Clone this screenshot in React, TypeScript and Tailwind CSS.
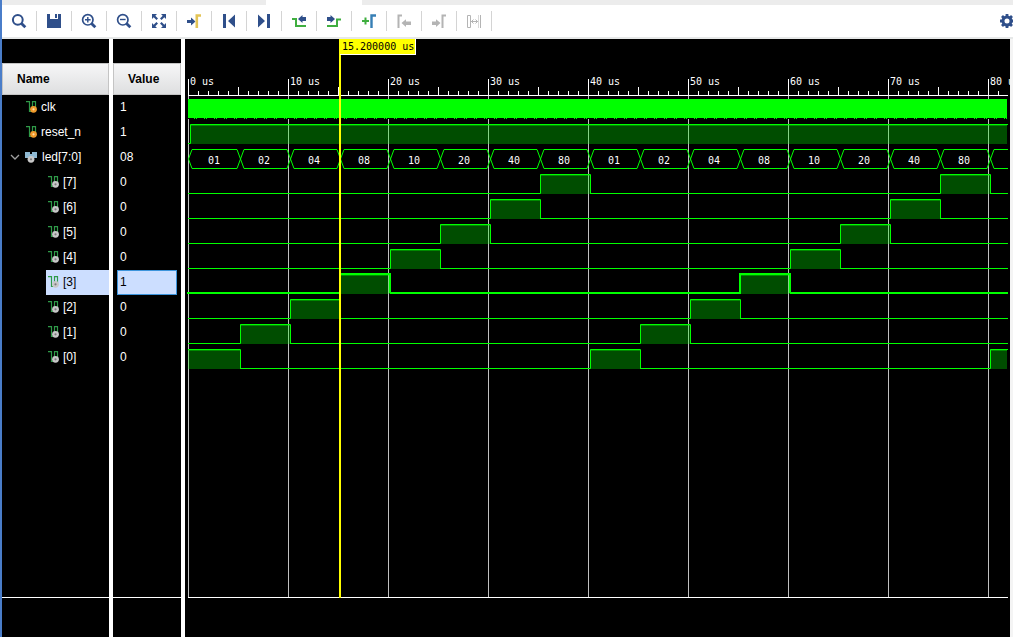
import { useState } from "react";

const GREEN = "#00ff00";
const NAVY = "#2f4f8a";
const LEAF = "#3fae3f";
const GRAY = "#b4b4b4";

type IconName =
  | "search" | "save" | "zoomIn" | "zoomOut" | "fit" | "gotoCursor" | "first" | "last"
  | "prevEdge" | "nextEdge" | "addMarker" | "prevMarker" | "nextMarker" | "swap" | "gear";

const icons: Record<IconName, React.ReactNode> = {
  search: (
    <g fill="none" stroke={NAVY}>
      <circle cx="6.800" cy="6.800" r="4.900" strokeWidth="2" />
      <path d="M10.500 10.500L14.300 14.300" strokeWidth="2.800" />
    </g>
  ),
  save: (
    <path fill={NAVY} fillRule="evenodd" d="M1 1H4V6H12V1H15V15H1ZM9 1H11V5H9Z" />
  ),
  zoomIn: (
    <g fill="none" stroke={NAVY}>
      <circle cx="6.800" cy="6.800" r="5.200" strokeWidth="1.700" />
      <path d="M10.500 10.500L14.300 14.300" strokeWidth="2.800" />
      <path d="M4 6.800H9.600M6.800 4V9.600" strokeWidth="1.400" />
    </g>
  ),
  zoomOut: (
    <g fill="none" stroke={NAVY}>
      <circle cx="6.800" cy="6.800" r="5.200" strokeWidth="1.700" />
      <path d="M10.500 10.500L14.300 14.300" strokeWidth="2.800" />
      <path d="M4 6.500H9.600" strokeWidth="1.400" />
    </g>
  ),
  fit: (
    <g fill={NAVY}>
      <path d="M1 1H6L4.300 2.700L7 5.400L5.400 7L2.700 4.300L1 6Z" />
      <path d="M15 1V6L13.300 4.300L10.600 7L9 5.400L11.700 2.700L10 1Z" />
      <path d="M1 15V10L2.700 11.700L5.400 9L7 10.600L4.300 13.300L6 15Z" />
      <path d="M15 15H10L11.700 13.300L9 10.600L10.600 9L13.300 11.700L15 10Z" />
    </g>
  ),
  gotoCursor: (
    <g>
      <path fill={NAVY} d="M1 7H5V4.500L9.500 8.500L5 12.500V10H1Z" />
      <path fill="none" stroke="#e3c456" strokeWidth="2.600" d="M15 2.500H10.800V15" />
    </g>
  ),
  first: <path fill={NAVY} d="M2 1H5V15H2ZM14 1.500V14.500L7 8Z" />,
  last: <path fill={NAVY} d="M14 1H11V15H14ZM2 1.500V14.500L9 8Z" />,
  prevEdge: (
    <g>
      <path fill="none" stroke={LEAF} strokeWidth="2" d="M1 6H5V13H15" />
      <path fill={NAVY} d="M15 4V8H11.500V10L7 6L11.500 2V4Z" />
    </g>
  ),
  nextEdge: (
    <g>
      <path fill="none" stroke={LEAF} strokeWidth="2" d="M1 13H11V6.500H15" />
      <path fill={NAVY} d="M1 4V8H4.500V10L9 6L4.500 2V4Z" />
    </g>
  ),
  addMarker: (
    <g fill="none" strokeWidth="2">
      <path stroke={LEAF} d="M1 8H8M4.500 4.500V11.500" />
      <path stroke="#377fb5" strokeWidth="2.400" d="M15 2.500H10.500V15" />
    </g>
  ),
  prevMarker: (
    <g>
      <path fill="none" stroke={GRAY} strokeWidth="2" d="M6 2.500H2.500V15" />
      <path fill={GRAY} d="M15 8.500V12H10V14L5.500 10L10 6.200V8.500Z" />
    </g>
  ),
  nextMarker: (
    <g>
      <path fill="none" stroke={GRAY} strokeWidth="2" d="M15 2.500H11.500V15" />
      <path fill={GRAY} d="M1 8.500V12H5V14L9.500 10L5 6.200V8.500Z" />
    </g>
  ),
  swap: (
    <g fill="none" stroke={GRAY}>
      <path d="M1.500 2.500H4.500V14.500H1.500ZM14.500 2V15" />
      <path d="M12.500 2V15" strokeOpacity="0.500" />
      <path d="M5 8.500H12M7.500 6.500L5.500 8.500L7.500 10.500M9.500 6.500L11.500 8.500L9.500 10.500" />
    </g>
  ),
  gear: (
    <g fill="none" stroke={NAVY}>
      <circle cx="8" cy="8" r="4" strokeWidth="3" />
      <path strokeWidth="2.800" d="M8 1V4M8 12V15M1 8H4M12 8H15M3 3L5 5M11 11L13 13M3 13L5 11M11 5L13 3" />
    </g>
  ),
};

function Icon({ name }: { name: IconName }) {
  return (
    <svg width="16" height="16" viewBox="0 0 16 16" aria-hidden="true">
      {icons[name]}
    </svg>
  );
}

const tools: { icon: IconName; label: string; disabled?: boolean }[] = [
  { icon: "search", label: "Find" },
  { icon: "save", label: "Save" },
  { icon: "zoomIn", label: "Zoom in" },
  { icon: "zoomOut", label: "Zoom out" },
  { icon: "fit", label: "Zoom fit" },
  { icon: "gotoCursor", label: "Go to cursor" },
  { icon: "first", label: "Go to start" },
  { icon: "last", label: "Go to end" },
  { icon: "prevEdge", label: "Previous transition" },
  { icon: "nextEdge", label: "Next transition" },
  { icon: "addMarker", label: "Add marker" },
  { icon: "prevMarker", label: "Previous marker", disabled: true },
  { icon: "nextMarker", label: "Next marker", disabled: true },
  { icon: "swap", label: "Swap cursors", disabled: true },
];

type Kind = "input" | "bus" | "bit";
const signals: { name: string; value: string; kind: Kind }[] = [
  { name: "clk", value: "1", kind: "input" },
  { name: "reset_n", value: "1", kind: "input" },
  { name: "led[7:0]", value: "08", kind: "bus" },
  ...[7, 6, 5, 4, 3, 2, 1, 0].map((n) => ({
    name: `[${n}]`,
    value: n === 3 ? "1" : "0",
    kind: "bit" as Kind,
  })),
];

const indent: Record<Kind, string> = { input: "pl-6", bus: "pl-2", bit: "pl-11" };
const inset: Record<Kind, string> = { input: "gap-[3px]", bus: "gap-[5px]", bit: "gap-[3px] pl-0.5" };

function SignalIcon({ kind }: { kind: Kind }) {
  const dot = kind === "input" ? "#f09a2c" : "#c8c8c8";
  const cx = kind === "bus" ? 6 : 7.5;
  return (
    <svg width="12" height="12" viewBox="0 0 12 12" aria-hidden="true" className="shrink-0">
      {kind === "bus" ? (
        <path fill="#8fb9d2" d="M0 1H5V3H7V1H12V7H9L6 10L3 7H0Z" />
      ) : (
        <path fill="none" stroke="#2f9a48" strokeWidth="1.200" d="M0 0.600H3.500V10.500H6.500V0.600H9.500V7" />
      )}
      <circle cx={cx} cy="8.300" r="3.400" fill={dot} />
      <circle cx={cx} cy="8.300" r="1.100" fill={kind === "input" ? "#ffe0a8" : "#7a7a7a"} />
    </svg>
  );
}

const END = 823;
const origin = 5;
const rowTop = (i: number) => 56 + i * 25;
const codes = ["01", "02", "04", "08", "10", "20", "40", "80"];

function Bit({ row, bit, bold }: { row: number; bit: number; bold: boolean }) {
  const top = rowTop(row) + 4;
  const low = top + 19;
  const w = bold ? 2 : 1;
  const off = bold ? 0 : 0.5;
  const shift = bold ? 1 : 0;
  const pulses = [0, 1, 2]
    .map((n) => {
      const at = origin + bit * 50 + n * 400;
      return { from: at === origin ? 3 : at, to: Math.min(at + 50, END) };
    })
    .filter((p) => p.from < END);
  let d = "";
  let x = bold ? 2 : 3;
  for (const p of pulses) {
    d += p.from > 3
      ? `M${x} ${low + off}H${p.from + off}V${top + off}H${p.to + off}`
      : `M3 ${top + off}H${p.to + off}`;
    if (p.to < END) d += `V${low + off}`;
    x = p.to;
  }
  if (x < END) d += `M${x} ${low + off}H${END}`;
  return (
    <g>
      {pulses.map((p) => {
        const width = Math.min(p.to, END - 1) - p.from;
        return (
          <g key={p.from}>
            <rect x={p.from} y={top} width={width} height="20" fill={GREEN} fillOpacity="0.3" />
            <rect x={p.from} y={top + 1} width={width} height="1" fill={GREEN} fillOpacity="0.35" />
          </g>
        );
      })}
      <path d={d} fill="none" stroke={GREEN} strokeWidth={w} transform={shift ? "translate(0 0)" : undefined} />
    </g>
  );
}

function Waveform() {
  const crossings = Array.from({ length: 17 }, (_, i) => origin + i * 50);
  const bus = rowTop(2) + 4;
  const busPath = crossings
    .map((x, i) => {
      const left = i === 0 ? 3 : x;
      const right = Math.min(x + 50, END + 4);
      return `M${right + 0.5} ${bus + 10}L${right - 3} ${bus + 0.5}H${left + 4}L${left + 0.5} ${bus + 10}L${left + 4} ${bus + 19.5}H${right - 3}L${right + 0.5} ${bus + 10}`;
    })
    .join("");
  const ticks = Array.from({ length: 82 }, (_, i) => i);
  return (
    <svg
      className="block h-full w-full font-['DejaVu_Sans_Mono',monospace] text-[10px]"
      role="img"
      aria-label="Waveform"
    >
      <defs>
        <clipPath id="plot">
          <rect x="0" y="0" width={END} height="600" />
        </clipPath>
        <pattern id="clkEdge" x="9" y="0" width="10" height="1" patternUnits="userSpaceOnUse">
          <path d="M0 0.500H1M2 0.500H3" stroke={GREEN} />
        </pattern>
      </defs>
      <g shapeRendering="crispEdges" stroke="#c0c0c0">
        {ticks.filter((t) => t % 10 === 0).map((t) => (
          <path key={t} d={`M${3.5 + t * 10} 57V558`} />
        ))}
      </g>
      <g shapeRendering="crispEdges" stroke="#ffffff">
        {ticks.map((t) => (
          <path key={t} d={`M${3.5 + t * 10} ${t % 10 === 0 ? 40 : t % 5 === 0 ? 48 : 52}V57`} />
        ))}
        <path d={`M3 56.500H${END}M3 558.500H${END}`} />
      </g>
      <g fill="#ffffff">
        {ticks.filter((t) => t % 10 === 0).map((t) => (
          <text key={t} x={5 + t * 10} y="46">{`${t} us`}</text>
        ))}
      </g>
      <g clipPath="url(#plot)">
        <rect x="3" y="60" width={END - 4} height="19" fill={GREEN} />
        <rect x="3" y="79" width={END - 4} height="1" fill="#000000" />
        <g transform="translate(0 79)">
          <rect x="3" y="0" width={END - 4} height="1" fill="url(#clkEdge)" />
        </g>
        <rect x="5" y="85" width={END - 6} height="20" fill={GREEN} fillOpacity="0.3" />
        <rect x="5" y="86" width={END - 6} height="1" fill={GREEN} fillOpacity="0.35" />
        <path d={`M3 104.500H5.500V85.500H${END}`} fill="none" stroke={GREEN} />
        <path d={busPath} fill="none" stroke={GREEN} />
        <g fill="#ffffff" textAnchor="middle">
          {crossings.slice(0, 16).map((x, i) => (
            <text key={x} x={x + 24} y={bus + 15}>{codes[i % 8]}</text>
          ))}
        </g>
        {[7, 6, 5, 4, 3, 2, 1, 0].map((n, i) => (
          <Bit key={n} row={i + 3} bit={n} bold={n === 3} />
        ))}
      </g>
      <rect x="154" y="0" width="2" height="559" fill="#ffff00" />
      <rect x="155" y="0" width="76" height="16" fill="#ffffff" />
      <rect x="155" y="0" width="75" height="15" fill="#ffff00" />
      <text x="157" y="11" fill="#000000">15.200000 us</text>
    </svg>
  );
}

export default function App() {
  const [selected, setSelected] = useState("[3]");
  return (
    <div className="flex h-screen min-w-0 flex-col overflow-hidden border-l-2 border-[#4a7dc9] bg-white font-['Liberation_Sans',Arial,sans-serif] text-xs">
      <div className="flex h-[5px] shrink-0 bg-[#ececec]">
        <div className="ml-66 w-24 bg-white" />
      </div>
      <div className="flex h-[34px] shrink-0 items-center justify-between border-b-2 border-[#e6e8e8] bg-white" role="toolbar">
        <div className="flex">
          {tools.map((t) => (
            <button
              key={t.icon}
              type="button"
              aria-label={t.label}
              disabled={t.disabled}
              className="flex h-5 w-[35px] items-center justify-center border-r border-[#d4d4d4]"
            >
              <Icon name={t.icon} />
            </button>
          ))}
        </div>
        <button type="button" aria-label="Settings" className="-mr-0.5">
          <Icon name="gear" />
        </button>
      </div>
      <div className="flex min-h-0 flex-1">
        <section className="flex w-[107px] shrink-0 flex-col bg-black pt-6 text-white" aria-label="Names">
          <h2 className="flex h-8 shrink-0 items-center border border-[#c4c4c4] bg-linear-to-b from-[#f6f6f7] to-[#dedfe0] pl-3.5 font-bold text-black">
            Name
          </h2>
          <ul className="min-h-0 flex-1">
            {signals.map((s) => (
              <li key={s.name} className={indent[s.kind]}>
                <button
                  type="button"
                  onClick={() => setSelected(s.name)}
                  className={`flex h-[25px] w-full items-center pb-0.5 text-left ${inset[s.kind]} ${s.name === selected ? "bg-[#ccdeff] text-black" : ""}`}
                >
                  {s.kind === "bus" && (
                    <svg width="10" height="6" viewBox="0 0 10 6" aria-hidden="true">
                      <path d="M1 1L5 5L9 1" fill="none" stroke="#a0a0a0" strokeWidth="1.300" />
                    </svg>
                  )}
                  <SignalIcon kind={s.kind} />
                  <span>{s.name}</span>
                </button>
              </li>
            ))}
          </ul>
          <div className="h-10 shrink-0 border-t border-white" />
        </section>
        <div className="w-1 shrink-0 bg-white" />
        <section className="flex w-[68px] shrink-0 flex-col bg-black pt-6 text-white" aria-label="Values">
          <h2 className="flex h-8 shrink-0 items-center border border-[#c4c4c4] bg-linear-to-b from-[#f6f6f7] to-[#dedfe0] pl-3.5 font-bold text-black">
            Value
          </h2>
          <ul className="min-h-0 flex-1 px-1">
            {signals.map((s) => (
              <li
                key={s.name}
                className={`flex h-[25px] items-center border pb-0.5 pl-0.5 ${s.name === selected ? "border-[#3c94dc] bg-[#ccdeff] text-black" : "border-transparent"}`}
              >
                {s.value}
              </li>
            ))}
          </ul>
          <div className="h-10 shrink-0 border-t border-white" />
        </section>
        <div className="w-1 shrink-0 bg-white" />
        <main className="min-w-0 flex-1 overflow-hidden bg-black">
          <Waveform />
        </main>
        <div className="w-[3px] shrink-0 bg-[#f4f4f4]" />
      </div>
    </div>
  );
}
